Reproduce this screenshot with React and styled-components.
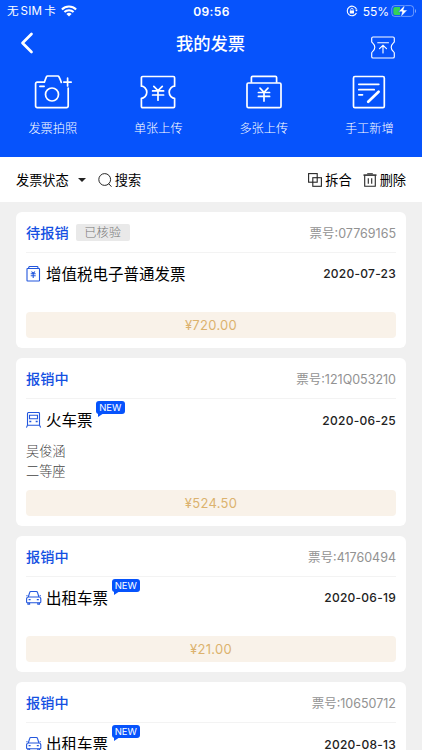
import React from "react";
import styled, { createGlobalStyle } from "styled-components";

const invoices = [
  {
    status: "待报销",
    tag: "已核验",
    number: "07769165",
    icon: "vat",
    title: "增值税电子普通发票",
    date: "2020-07-23",
    amount: "¥720.00",
  },
  {
    status: "报销中",
    number: "121Q053210",
    icon: "train",
    title: "火车票",
    isNew: true,
    date: "2020-06-25",
    details: ["吴俊涵", "二等座"],
    amount: "¥524.50",
  },
  {
    status: "报销中",
    number: "41760494",
    icon: "taxi",
    title: "出租车票",
    isNew: true,
    date: "2020-06-19",
    amount: "¥21.00",
  },
  {
    status: "报销中",
    number: "10650712",
    icon: "taxi",
    title: "出租车票",
    isNew: true,
    date: "2020-08-13",
  },
];

function WifiIcon() {
  return (
    <svg width="16" height="12" viewBox="0 0 16 12" fill="none" stroke="#fff" strokeWidth="2.1">
      <path d="M0.9 4.4a10.2 10.2 0 0 1 14.2 0" />
      <path d="M3.4 7.1a6.6 6.6 0 0 1 9.2 0" />
      <path d="M8 11.4L5.4 8.9a3.8 3.8 0 0 1 5.2 0z" fill="#fff" stroke="none" />
    </svg>
  );
}

function LockRotationIcon() {
  return (
    <svg width="12" height="12" viewBox="0 0 12 12" fill="none" stroke="#fff">
      <path d="M10.6 4.4A4.8 4.8 0 1 0 10.4 8" strokeWidth="1.1" />
      <path d="M9 4.8h2.8L10.5 6.6z" fill="#fff" stroke="none" />
      <rect x="3.8" y="5.4" width="4.2" height="3.2" rx="0.4" fill="#fff" stroke="none" />
      <path d="M4.7 5.6V4.5a1.2 1.2 0 0 1 2.4 0v1.1" strokeWidth="0.8" />
    </svg>
  );
}

function BatteryIcon() {
  return (
    <svg width="26" height="14" viewBox="0 0 26 14" fill="none">
      <rect x="0.8" y="1.6" width="21.8" height="10.8" rx="3" stroke="#fff" strokeOpacity="0.4" />
      <path d="M24 5v4c1.4-.5 1.4-3.5 0-4z" fill="#fff" fillOpacity="0.5" />
      <path d="M4 3h5v8H4a1.7 1.7 0 0 1-1.7-1.7V4.7A1.7 1.7 0 0 1 4 3z" fill="#34d158" />
      <path
        d="M14 0.8L7.4 7.8h3.7L9.6 13.2l6.8-7.1h-3.8z"
        fill="#fff"
        stroke="#0653fc"
        strokeWidth="0.5"
      />
    </svg>
  );
}

function BackIcon() {
  return (
    <svg width="14" height="22" viewBox="0 0 14 22" fill="none" stroke="#fff" strokeWidth="2.7">
      <path d="M11.5 2L2.5 11l9 9" strokeLinecap="round" strokeLinejoin="round" />
    </svg>
  );
}

function TicketUploadIcon() {
  return (
    <svg width="26" height="23" viewBox="0 0 26 23" fill="none" stroke="#fff" strokeWidth="1.15">
      <path
        d="M3 1h20a1.3 1.3 0 0 1 1.3 1.3v3.4c0 1-3.1 2-3.1 5.5s3.1 4.5 3.1 5.5v4A1.3 1.3 0 0 1 23 22H3a1.3 1.3 0 0 1-1.3-1.3v-4c0-1 3.1-2 3.1-5.5S1.7 6.7 1.7 5.7V2.3A1.3 1.3 0 0 1 3 1z"
        strokeLinejoin="round"
      />
      <path d="M7.7 6.7h10.8M13 17V9.7M9.5 12.7L13 9.3l3.5 3.4" strokeLinecap="round" />
    </svg>
  );
}

function CameraIcon() {
  return (
    <svg width="38" height="36" viewBox="0 0 38 36" fill="none" stroke="#fff" strokeWidth="1.7">
      <path
        d="M27.3 8.4l-.8-2.2-1.5-3.4a1.4 1.4 0 0 0-1.2-.8H13.6a1.4 1.4 0 0 0-1.2.8L10.4 8.1H3.2A1.6 1.6 0 0 0 1.6 9.7v22.4a1.6 1.6 0 0 0 1.6 1.6h29.4a1.6 1.6 0 0 0 1.6-1.6V14.2"
        strokeLinecap="round"
        strokeLinejoin="round"
      />
      <path d="M29.8 8.1h7.4M33.6 4.2v7.8" strokeLinecap="round" />
      <path d="M5.9 12.3h4.2" strokeLinecap="round" />
      <circle cx="18" cy="20.5" r="6.5" />
    </svg>
  );
}

function SingleTicketIcon() {
  return (
    <svg width="38" height="36" viewBox="0 0 38 36" fill="none" stroke="#fff" strokeWidth="1.7">
      <path
        d="M3.6 2.5h30.8a1.2 1.2 0 0 1 1.2 1.2v8.5c-2.5 0-5.4 2.6-5.4 6.1s2.9 6.1 5.4 6.1v8.1a1.2 1.2 0 0 1-1.2 1.2H3.6a1.2 1.2 0 0 1-1.2-1.2v-8.1c2.5 0 5.4-2.6 5.4-6.1S4.9 12.2 2.4 12.2V3.7a1.2 1.2 0 0 1 1.2-1.2z"
        strokeLinejoin="round"
      />
      <path d="M14.8 12.3l4.2 4.3 4.3-4.3M13.6 16.9h11M13.6 21h11M19 16.7v9.5" strokeLinecap="round" />
    </svg>
  );
}

function MultiTicketIcon() {
  return (
    <svg width="38" height="36" viewBox="0 0 38 36" fill="none" stroke="#fff" strokeWidth="1.7">
      <rect x="2" y="9" width="34" height="24.7" rx="1.4" />
      <path d="M6.4 8.8V3.6a1.2 1.2 0 0 1 1.2-1.2h22.8a1.2 1.2 0 0 1 1.2 1.2v5.2" />
      <path d="M15 14.2l4 4.1 4-4.1M13.4 18.5h11.2M13.4 22.4h11.2M19 18.4v8.7" strokeLinecap="round" />
    </svg>
  );
}

function ManualIcon() {
  return (
    <svg width="38" height="36" viewBox="0 0 38 36" fill="none" stroke="#fff" strokeWidth="1.7">
      <rect x="3.5" y="2.5" width="30.8" height="31.2" rx="1.4" />
      <path d="M8.8 10.3h20M8.8 15.7h15.4M8.8 20.8h3.7" strokeLinecap="round" />
      <path d="M28.6 17.8L18.2 27.8" strokeWidth="2.7" strokeLinecap="round" />
    </svg>
  );
}

function SearchIcon() {
  return (
    <svg width="14" height="14" viewBox="0 0 14 14" fill="none" stroke="#262626">
      <circle cx="6.7" cy="6.5" r="5.9" />
      <path d="M10.9 10.9l2.3 2.5" strokeLinecap="round" />
    </svg>
  );
}

function SplitIcon() {
  return (
    <svg width="14" height="14" viewBox="0 0 14 14" fill="none" stroke="#262626" strokeWidth="1.1">
      <rect x="0.6" y="0.6" width="8.6" height="8.6" />
      <rect x="4.8" y="4.7" width="8.6" height="8.6" />
    </svg>
  );
}

function TrashIcon() {
  return (
    <svg width="14" height="14" viewBox="0 0 14 14" fill="none" stroke="#262626" strokeWidth="1.1">
      <path d="M0.5 2.1h13" strokeWidth="1.5" />
      <path d="M4.2 0.7h5.6M1.7 2.5v10.8h10.6V2.5M5.3 5.2v5.5M8.7 5.2v5.5" />
    </svg>
  );
}

function VatIcon() {
  return (
    <svg width="16" height="16" viewBox="0 0 16 16" fill="none" stroke="#2357dd" strokeWidth="1.1">
      <rect x="1" y="2.5" width="12.5" height="12.5" rx="0.5" />
      <path d="M2.7 2.5v-1a1 1 0 0 1 1-1h7.3a1 1 0 0 1 1 1v1" />
      <path d="M5.5 5.5l1.7 1.900L8.900 5.500M4.700 7.700h5M4.700 9.700h5M7.200 7.500v4.600" />
    </svg>
  );
}

function TrainIcon() {
  return (
    <svg width="16" height="16" viewBox="0 0 16 16" fill="none" stroke="#2357dd" strokeWidth="1.1">
      <path d="M1.5 13.2V1.5a1 1 0 0 1 1-1h10a1 1 0 0 1 1 1v11.7z" />
      <path d="M3.5 3.2h8v3.600h-8z" />
      <path d="M3.300 9.500h2M9.700 9.500h2" strokeWidth="1.4" />
      <path d="M1.500 13.200L0.400 15.600M13.500 13.200l1.200 2.400" />
    </svg>
  );
}

function TaxiIcon() {
  return (
    <svg width="16" height="16" viewBox="0 0 16 16" fill="none" stroke="#2357dd" strokeWidth="1.1">
      <path d="M2.300 7L3.700 2.400a1.200 1.200 0 0 1 1.200-.9h5.400a1.200 1.200 0 0 1 1.200.9L12.900 7" />
      <path d="M1.500 12.800c-.6 0-.9-.4-.9-.9V9c0-1.200.9-2 2-2h10.200c1.100 0 2 .8 2 2v2.900c0 .5-.3.900-.9.900z" />
      <path d="M0.300 5.700h1.300M13.600 5.700h1.300" />
      <path d="M2.600 9.700h2M10.800 9.700h2" strokeWidth="1.3" />
      <path d="M1.900 12.800v1.300h1.700v-1.300M11.800 12.800v1.300h1.700v-1.300" />
    </svg>
  );
}

const typeIcons = { vat: VatIcon, train: TrainIcon, taxi: TaxiIcon };

const actions = [
  { label: "发票拍照", Icon: CameraIcon },
  { label: "单张上传", Icon: SingleTicketIcon },
  { label: "多张上传", Icon: MultiTicketIcon },
  { label: "手工新增", Icon: ManualIcon },
];

function InvoiceCard({ invoice }) {
  const TypeIcon = typeIcons[invoice.icon];
  return (
    <Card>
      <CardHead>
        <Status>{invoice.status}</Status>
        {invoice.tag && <Tag>{invoice.tag}</Tag>}
        <TicketNumber>票号:{invoice.number}</TicketNumber>
      </CardHead>
      <CardBody>
        <TitleRow>
          <TypeIcon />
          <InvoiceTitle>
            {invoice.title}
            {invoice.isNew && <NewBadge>NEW</NewBadge>}
          </InvoiceTitle>
          <InvoiceDate>{invoice.date}</InvoiceDate>
        </TitleRow>
        {invoice.details && invoice.details.map((line) => <Detail key={line}>{line}</Detail>)}
      </CardBody>
      {invoice.amount && <Amount>{invoice.amount}</Amount>}
    </Card>
  );
}

function App() {
  return (
    <Screen>
      <GlobalStyle />
      <Header>
        <StatusBar>
          <Carrier>
            无<span>SIM</span>卡 <WifiIcon />
          </Carrier>
          <Clock>09:56</Clock>
          <Battery>
            <LockRotationIcon />
            <span>55%</span>
            <BatteryIcon />
          </Battery>
        </StatusBar>
        <NavBar>
          <BackIcon />
          <PageTitle>我的发票</PageTitle>
          <UploadButton>
            <TicketUploadIcon />
          </UploadButton>
        </NavBar>
        <ActionRow>
          {actions.map(({ label, Icon }) => (
            <Action key={label}>
              <Icon />
              <p>{label}</p>
            </Action>
          ))}
        </ActionRow>
      </Header>
      <Toolbar>
        <ToolGroup $gap={12}>
          <Tool>
            发票状态
            <Caret />
          </Tool>
          <Tool>
            <SearchIcon />
            搜索
          </Tool>
        </ToolGroup>
        <ToolGroup $gap={11}>
          <Tool>
            <SplitIcon />
            拆合
          </Tool>
          <Tool>
            <TrashIcon />
            删除
          </Tool>
        </ToolGroup>
      </Toolbar>
      <List>
        {invoices.map((invoice) => (
          <InvoiceCard key={invoice.number} invoice={invoice} />
        ))}
      </List>
    </Screen>
  );
}

export default App;

const GlobalStyle = createGlobalStyle`
  * {
    box-sizing: border-box;
  }

  body {
    margin: 0;
    overflow: hidden;
    background: #f0f0f0;
    font-family: Inter, "Noto Sans CJK SC", sans-serif;
  }

  p {
    margin: 0;
  }

  svg {
    display: block;
    flex-shrink: 0;
  }
`;

const Screen = styled.div`
  display: flex;
  flex-direction: column;
  width: 422px;
  height: 750px;
  overflow: hidden;
  background: #f0f0f0;
`;

const Header = styled.div`
  flex-shrink: 0;
  height: 157px;
  color: #fff;
  background: #0653fc;
`;

const StatusBar = styled.div`
  display: grid;
  grid-template-columns: 1fr auto 1fr;
  align-items: center;
  height: 22px;
  padding: 0 5px 0 7px;
  font-size: 12px;
`;

const Carrier = styled.div`
  display: flex;
  align-items: center;
  font-size: 11.6px;
  line-height: 16px;

  span {
    margin: 0 2px;
    letter-spacing: 0.2px;
  }

  svg {
    margin: -1px 0 0 5px;
  }
`;

const Clock = styled.div`
  padding-right: 1px;
  font-weight: 600;
  letter-spacing: 0.4px;
`;

const Battery = styled.div`
  display: flex;
  align-items: center;
  justify-content: flex-end;

  span {
    margin: 0 2px 0 5px;
  }
`;

const NavBar = styled.div`
  display: grid;
  grid-template-columns: 60px 1fr 60px;
  align-items: center;
  height: 42px;
  padding: 0 14px 0 20px;
`;

const PageTitle = styled.div`
  padding: 0 7px 1px 0;
  font-size: 17.3px;
  font-weight: 500;
  text-align: center;
`;

const UploadButton = styled.div`
  display: flex;
  justify-content: flex-end;
  padding: 8px 12px 0 0;
`;

const ActionRow = styled.div`
  display: grid;
  grid-template-columns: repeat(4, 1fr);
  padding-top: 10px;
`;

const Action = styled.div`
  display: flex;
  flex-direction: column;
  align-items: center;

  p {
    margin-top: 10px;
    font-size: 12.2px;
    line-height: 18px;
    font-weight: 300;
  }
`;

const Toolbar = styled.div`
  display: flex;
  flex-shrink: 0;
  align-items: center;
  justify-content: space-between;
  height: 45px;
  padding: 0 16px;
  background: #fff;
`;

const ToolGroup = styled.div`
  display: flex;
  gap: ${(props) => props.$gap}px;
`;

const Tool = styled.div`
  display: flex;
  align-items: center;
  font-size: 13.2px;
  font-weight: 400;
  color: #000;

  svg {
    margin-right: 3px;
  }
`;

const Caret = styled.span`
  margin-left: 9px;
  border-top: 4px solid #222;
  border-left: 4px solid transparent;
  border-right: 4px solid transparent;
`;

const List = styled.div`
  display: flex;
  flex-direction: column;
  gap: 10px;
  padding: 10px 16px;
`;

const Card = styled.div`
  flex-shrink: 0;
  padding: 0 10px 10px;
  border-radius: 6px;
  background: #fff;
`;

const CardHead = styled.div`
  display: flex;
  align-items: center;
  height: 41px;
  border-bottom: 1px solid #f3f3f3;
`;

const Status = styled.div`
  font-size: 14.2px;
  font-weight: 500;
  color: #1450e2;
`;

const Tag = styled.div`
  width: 54px;
  height: 17px;
  margin-left: 7px;
  border-radius: 2px;
  background: #e9e9e9;
  color: #777;
  font-size: 12.2px;
  font-weight: 300;
  line-height: 17px;
  text-align: center;
`;

const TicketNumber = styled.div`
  margin-left: auto;
  font-size: 12.5px;
  color: #929292;
`;

const CardBody = styled.div`
  min-height: 59.1px;
  padding-bottom: 7.8px;
`;

const TitleRow = styled.div`
  display: flex;
  align-items: center;
  height: 41.4px;
`;

const InvoiceTitle = styled.div`
  position: relative;
  margin-left: 4px;
  padding-top: 1px;
  font-size: 15.5px;
  font-weight: 400;
  line-height: 23px;
  color: #000;
`;

const NewBadge = styled.span`
  position: absolute;
  left: calc(100% + 3.5px);
  top: -7px;
  width: 28.5px;
  height: 13px;
  border-radius: 3px;
  background: #0653fc;
  color: #fff;
  font-size: 9.5px;
  font-weight: 400;
  line-height: 13px;
  text-align: center;

  &::after {
    content: "";
    position: absolute;
    left: 2px;
    top: 12px;
    border-top: 4px solid #0653fc;
    border-right: 6px solid transparent;
  }
`;

const InvoiceDate = styled.div`
  margin-left: auto;
  font-size: 12px;
  font-weight: 500;
  letter-spacing: 0.25px;
  color: #222;
`;

const Detail = styled.p`
  font-size: 13.2px;
  font-weight: 300;
  line-height: 20.6px;
  color: #444;
`;

const Amount = styled.div`
  height: 26.3px;
  border-radius: 4px;
  background: #f9f2e9;
  color: #dcb26e;
  font-size: 13px;
  line-height: 26px;
  letter-spacing: 0.3px;
  text-align: center;
`;
